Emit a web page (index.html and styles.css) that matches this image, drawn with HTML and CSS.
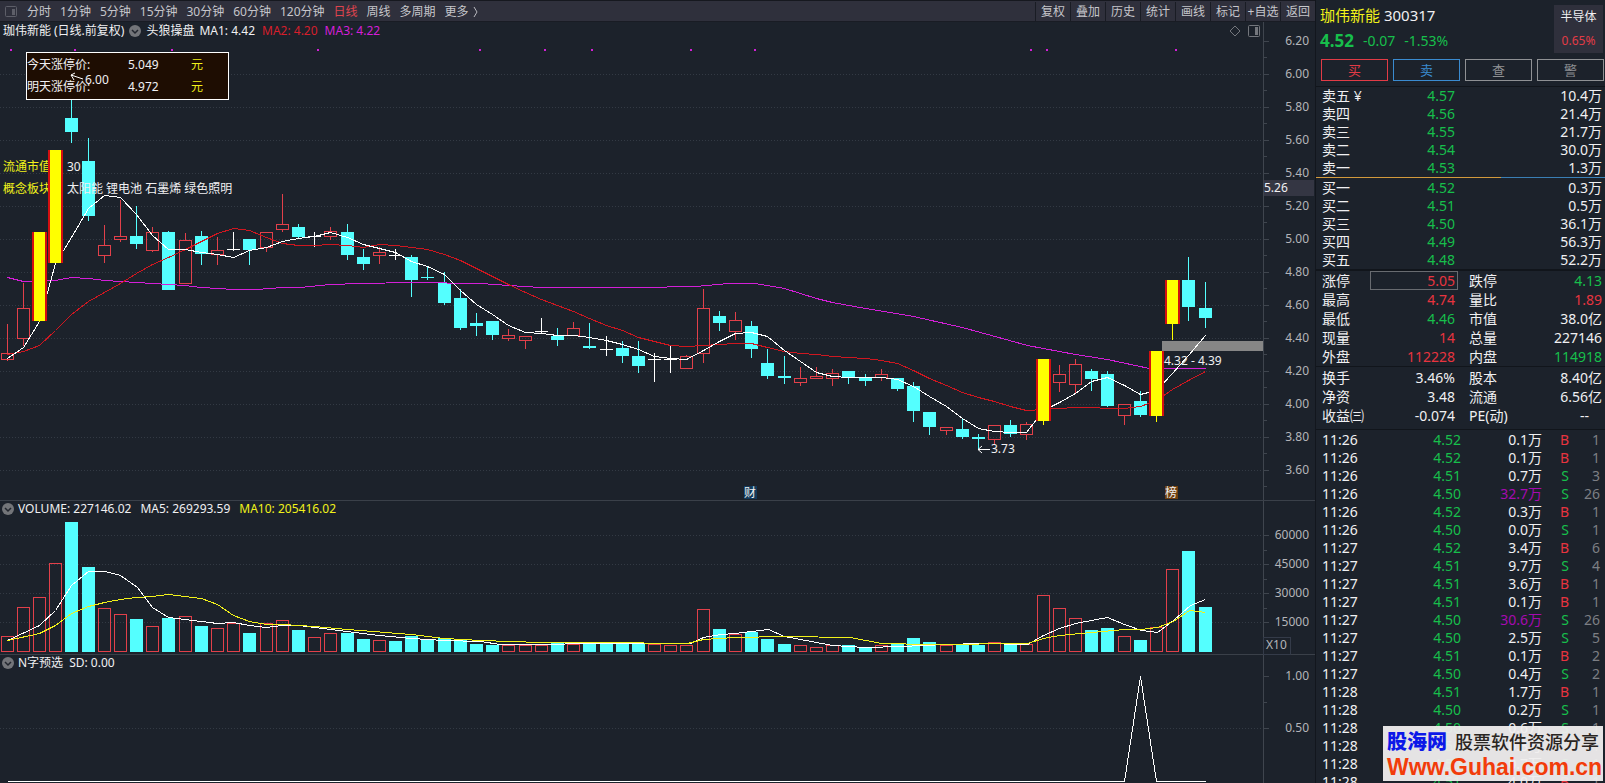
FILE: index.html
```html
<!DOCTYPE html>
<html lang="zh-CN">
<head>
<meta charset="utf-8">
<title>珈伟新能 300317</title>
<link rel="stylesheet" href="styles.css">
</head>
<body>
<div class="app">
  <main class="charts">
    <nav class="toolbar">
      <button class="tool-icon" aria-label="侧栏"><svg width="12" height="12" viewBox="0 0 12 12"><rect x="0.5" y="0.5" width="11" height="10" rx="1" fill="none" stroke="#5d5e68"/><rect x="7" y="3" width="3" height="6" fill="#5d5e68"/></svg></button>
      <div class="periods">
        <button>分时</button><button>1分钟</button><button>5分钟</button><button>15分钟</button><button>30分钟</button><button>60分钟</button><button>120分钟</button><button class="active">日线</button><button>周线</button><button>多周期</button><button class="more">更多<svg width="6" height="12" viewBox="0 0 6 12"><path d="M1 1L4 6L1 11" fill="none" stroke="#b8b8be"/></svg></button>
      </div>
      <div class="actions">
        <button>复权</button><button>叠加</button><button>历史</button><button>统计</button><button>画线</button><button>标记</button><button>+自选</button><button>返回</button>
      </div>
    </nav>

    <section class="panel">
      <header class="panel-head tall">
        <span class="legend"><span>珈伟新能<span class="paren">(日线.前复权)</span></span>
          <svg class="chev" width="12" height="12" viewBox="0 0 12 12"><circle cx="6" cy="6" r="6" fill="#737579"/><path d="M3 5L6 8L9 5" fill="none" stroke="#22262e" stroke-width="1.5"/></svg>
          <span>头狼操盘</span><span class="averages"><span>MA1: 4.42</span><span class="red">MA2: 4.20</span><span class="magenta">MA3: 4.22</span></span></span>
        <span class="head-icons">
          <svg width="12" height="12" viewBox="0 0 12 12"><path d="M6 1L11 6L6 11L1 6Z" fill="none" stroke="#74777d"/></svg>
          <svg width="12" height="12" viewBox="0 0 12 12"><rect x="0.5" y="0.5" width="11" height="11" rx="1" fill="none" stroke="#74777d"/><rect x="7" y="2" width="3" height="8" fill="#74777d"/></svg>
        </span>
        <span class="axis-pad"></span>
      </header>
      <svg class="plot" id="price" viewBox="0 40 1315 460"></svg>
    </section>

    <section class="panel">
      <header class="panel-head">
        <span class="legend">
          <svg class="chev" width="12" height="12" viewBox="0 0 12 12"><circle cx="6" cy="6" r="6" fill="#737579"/><path d="M3 5L6 8L9 5" fill="none" stroke="#22262e" stroke-width="1.5"/></svg>
          <span class="values"><span>VOLUME: 227146.02</span><span>MA5: 269293.59</span><span class="yellow">MA10: 205416.02</span></span></span>
        <span class="axis-pad"></span>
      </header>
      <svg class="plot" id="volume" viewBox="0 518 1315 136"></svg>
    </section>

    <section class="panel last">
      <header class="panel-head">
        <span class="legend">
          <svg class="chev" width="12" height="12" viewBox="0 0 12 12"><circle cx="6" cy="6" r="6" fill="#737579"/><path d="M3 5L6 8L9 5" fill="none" stroke="#22262e" stroke-width="1.5"/></svg>
          <span>N字预选</span><span>SD: 0.00</span></span>
        <span class="axis-pad"></span>
      </header>
      <svg class="plot" id="signal" viewBox="0 672 1315 111"></svg>
    </section>
  </main>

  <aside class="quote">
    <header class="quote-head">
      <div class="quote-title">
        <h1><span class="yellow">珈伟新能</span> 300317</h1>
        <p><strong>4.52</strong><span>-0.07</span><span>-1.53%</span></p>
      </div>
      <a class="sector" href="#">半导体<span>0.65%</span></a>
    </header>
    <div class="trade">
      <button class="buy">买</button><button class="sell">卖</button><button>查</button><button>警</button>
    </div>
    <table class="book asks"><tbody id="asks"></tbody></table>
    <div class="ratio"><span></span></div>
    <table class="book bids"><tbody id="bids"></tbody></table>
    <table class="stats"><tbody id="stats"></tbody></table>
    <table class="stats second"><tbody id="capital"></tbody></table>
    <table class="ticks"><tbody id="ticks"></tbody></table>
    <div class="brand">
      <div><b>股海网</b><span>股票软件资源分享</span></div>
      <a href="#">Www.Guhai.com.cn</a>
    </div>
  </aside>
</div>
<script src="app.js"></script>
</body>
</html>
```

FILE: styles.css
```css
* { box-sizing: border-box; }
body {
  margin: 0;
  background: #1c222b;
  color: #f0f0f2;
  font: 12px/18px "Noto Sans", "Noto Sans CJK SC", sans-serif;
}
button { font: inherit; color: inherit; background: none; border: 0; padding: 0; margin: 0; }
a { color: inherit; text-decoration: none; }
.app {
  display: grid;
  grid-template-columns: minmax(0, 1fr) 290px;
  height: 100vh;
  overflow: hidden;
}
.red { color: #d61f2c; }
.magenta { color: #d41fd8; }
.yellow { color: #f2f21a; }

.charts { min-width: 0; }
.toolbar {
  display: flex;
  align-items: center;
  height: 22px;
  padding-top: 1px;
  background: #2f303c;
  border-top: 1px solid #16181f;
  border-bottom: 1px solid #191c24;
  color: #c6c6cb;
  line-height: 20px;
}
.tool-icon { display: flex; width: 27px; padding-left: 5px; }
.periods { display: flex; gap: 9px; flex: 1; white-space: nowrap; }
.active { color: #e0444e; }
.more { display: flex; align-items: center; gap: 4px; }
.actions { display: flex; }
.actions button { width: 35px; border-left: 1px solid #191c24; white-space: nowrap; }

.panel { border-bottom: 1px solid #3a4049; }
.panel.last { border-bottom: 0; }
.panel-head { display: flex; height: 17px; line-height: 16px; white-space: nowrap; }
.panel-head.tall { height: 18px; line-height: 18px; }
.legend { display: flex; align-items: center; gap: 6px; flex: 1; padding: 0 0 1px 2px; }
.legend .chev { margin-right: -2px; }
.panel-head.tall .legend { padding: 0 0 0 3px; gap: 5px; }
.panel-head.tall .chev { margin-right: 0; }
.averages { display: flex; gap: 7px; }
.values { display: flex; gap: 9px; }
.paren { padding-left: 3px; }
.head-icons { display: flex; align-items: center; gap: 7px; padding: 0 3px; }
.axis-pad { width: 52px; border-left: 1px solid #3f454e; }
.plot { display: block; width: 100%; height: auto; overflow: visible; font-size: 12px; }
.plot text { fill: #f0f0f2; }
.plot .axis-text { fill: #b4b5b9; text-anchor: end; }
.plot .unit { fill: #b4b5b9; }
.plot .label-yellow { fill: #f2f21a; }

.quote { position: relative; border-left: 1px solid #12161d; font-size: 14px; overflow: hidden; }
.quote-head { display: flex; justify-content: space-between; height: 59px; padding: 5px 2px 0 4px; }
.quote-title h1 { margin: 0; font-size: 15px; line-height: 20px; font-weight: 400; }
.quote-title p { display: flex; align-items: center; gap: 9px; margin: 4px 0 0; line-height: 24px; color: #17bf4b; }
.quote-title strong { font-size: 17px; }
.sector {
  display: flex;
  flex-direction: column;
  width: 49px;
  height: 48px;
  background: #2f303c;
  font-size: 12px;
  line-height: 24px;
  text-align: center;
}
.sector span { color: #e23b46; }
.trade { display: grid; grid-template-columns: repeat(4, 1fr); gap: 5px; padding: 0 1px 5px 5px; border-bottom: 1px solid #11151b; }
.trade button { height: 22px; border: 1px solid #8f9194; color: #8f9194; font-size: 13px; line-height: 20px; }
.trade .buy { border-color: #e23b46; color: #e23b46; }
.trade .sell { border-color: #3a8bd0; color: #3a8bd0; }

table { width: 100%; border-collapse: separate; border-spacing: 0; table-layout: fixed; }
th, td { padding: 0; font-weight: 400; height: 18px; line-height: 18px; white-space: nowrap; }
th { text-align: left; }
td { text-align: right; }
.up { color: #e8343f; }
.down { color: #17bf4b; }
.big { color: #a50ab0; }
.book th { width: 60px; padding-left: 6px; }
.book td:nth-child(2) { width: 79px; }
.book td:last-child { padding-right: 3px; }
.ratio { height: 2px; background: #1c222b; }
.ratio span { display: block; height: 1px; background: linear-gradient(to right, #d29a3c 64%, #3a7fb5 64%); }
.bids { border-bottom: 2px solid #11151b; }
.stats { border-bottom: 1px solid #11151b; }
.stats th, .stats td { height: 19px; line-height: 19px; }
.stats th:first-child { width: 54px; padding-left: 6px; }
.stats td:nth-child(2) { width: 88px; padding-right: 3px; }
.stats th:nth-child(3) { padding-left: 11px; width: 66px; }
.stats td:last-child { padding-right: 3px; }
.stats.second { padding: 1px 0 4px; }
.stats .boxed { outline: 1px solid #686b70; outline-offset: -1px; }
.stats td.dash:last-child { padding-right: 16px; }
.ticks { padding-top: 1px; }
.ticks th { width: 59px; padding-left: 6px; }
.ticks td:nth-child(2) { width: 86px; }
.ticks td:nth-child(3) { width: 81px; }
.ticks td:nth-child(4) { width: 27px; }
.ticks td:last-child { padding-right: 5px; color: #7c7f84; }

.brand {
  position: absolute;
  right: 2px;
  bottom: 2px;
  width: 220px;
  height: 55px;
  padding: 2px 4px;
  background: rgba(240, 238, 238, 0.95);
  white-space: nowrap;
}
.brand div { display: flex; align-items: center; gap: 8px; line-height: 28px; }
.brand b { color: #0c18e8; font-size: 20px; font-weight: 900; }
.brand span { color: #2a2522; font-size: 18px; font-weight: 500; }
.brand a { display: block; color: #f23c0a; font: bold 23px/22px "Liberation Sans", Arial, sans-serif; }
```

FILE: app.js
```js
const PITCH = 16.189;
const cx = i => Math.floor(7.06 + i * PITCH);
const CYAN = '#54ffff';
const RED = '#e2404a';

// [kind, high, top, bottom, low, volumeTop, volumeKind]; c = falling, r = rising, w = unchanged, y = limit up
const candles = [
  ['r',324,353,359,361,636],['r',283,308,338,346,607],['y',232,232,321,322,597],['y',150,150,263,263,563],
  ['c',99,118,132,143,522],['c',138,161,216,221,567],['r',225,245,255,263,608],['r',200,236,239,242,614],
  ['c',206,236,244,249,619],['r',227,232,250,252,626],['c',231,232,290,290,618],['r',233,240,283,283,616],
  ['c',231,236,254,265,626],['r',237,250,254,265,628],['w',232,249,249,251,623,'r'],['c',239,239,250,265,633],
  ['r',232,232,247,252,623],['r',194,224,229,232,620],['c',224,227,237,239,630],['w',232,236,236,247,637,'r'],
  ['r',227,231,236,240,633],['c',224,232,255,260,633],['c',249,257,264,270,639],['r',247,252,255,264,640],
  ['w',249,255,255,260,641,'c'],['c',255,257,280,297,636],['c',267,277,278,280,639],['c',272,283,303,305,638],
  ['c',289,298,328,330,639],['c',313,323,326,336,644],['c',321,321,335,340,645],['r',329,335,338,341,645],
  ['r',336,336,340,349,645],['w',318,331,331,333,645,'r'],['c',328,336,340,346,643],['r',322,328,335,335,644],
  ['c',323,346,348,349,643],['w',336,349,349,356,644,'c'],['c',341,348,356,363,643],['c',341,356,366,373,643],
  ['w',353,359,359,382,644,'r'],['w',346,359,359,373,645,'r'],['r',355,356,368,369,645],['r',289,308,353,363,609],
  ['c',311,316,323,331,629],['r',312,320,331,340,634],['c',321,326,349,358,632],['c',349,363,376,379,639],
  ['c',356,376,378,384,644],['r',367,378,382,386,645],['r',367,376,378,379,647],['r',369,373,378,386,645],
  ['c',371,371,378,384,645],['c',374,377,381,386,647],['r',369,374,377,381,645],['c',378,378,389,391,644],
  ['c',382,386,411,422,638],['c',412,412,427,435,642],['r',427,427,430,435,645],['c',418,429,437,439,645],
  ['c',434,437,439,450,645],['r',425,425,439,444,642],['c',420,425,434,437,645],['r',422,424,434,440,644],
  ['y',359,359,421,425,595],['r',365,374,382,392,608],['r',359,364,384,393,618],['c',369,371,379,391,630],
  ['c',371,374,406,407,628],['r',404,404,415,425,636],['c',391,401,415,417,640],['y',351,351,416,422,627],
  ['y',280,280,324,340,569],['c',257,280,307,321,551],['c',282,308,318,328,607]
];

const ma1 = [358,347,321,263,237,208,195,197,214,235,249,249,252,254,257,250,247,241,238,236,232,237,244,248,252,261,266,274,290,304,314,325,332,333,335,335,337,340,344,349,356,358,359,350,341,333,332,336,350,361,372,376,377,377,377,379,386,396,406,418,428,431,432,432,410,402,393,381,377,385,394,390,373,355,335];
const ma2 = [354,351,345,330,314,301,292,283,273,264,257,249,241,233,228,230,237,243,245,245,244,245,247,244,245,247,249,254,260,268,276,284,292,299,305,311,318,325,330,337,341,345,346,345,344,343,343,347,351,353,354,356,357,358,360,363,370,378,385,392,397,401,406,410,409,408,407,407,408,408,406,400,389,380,371];
const ma3 = [[7,277],[23,281],[55,280],[71,277],[88,278],[104,280],[136,282],[184,285],[201,287],[233,289],[256,289],[282,287],[300,287],[330,284],[360,283],[411,282],[480,283],[508,285],[541,287],[638,287],[695,286],[728,283],[755,283],[784,288],[816,298],[832,302],[865,308],[913,316],[962,327],[1027,345],[1075,354],[1107,359],[1149,368],[1205,368]];
const vma5 = [[7,640],[39,625],[55,610],[71,585],[88,571],[105,571],[120,575],[137,587],[152,607],[168,617],[201,621],[217,623],[233,622],[249,625],[266,627],[282,625],[298,625],[330,629],[379,635],[411,638],[444,640],[480,641],[500,644],[530,644],[600,643],[690,643],[703,637],[720,634],[735,633],[751,631],[768,629],[784,636],[832,645],[865,647],[900,646],[946,644],[980,643],[1027,644],[1043,635],[1059,628],[1075,623],[1107,617],[1124,624],[1141,630],[1157,632],[1173,620],[1190,605],[1205,599]];
const vma10 = [[7,640],[39,633],[55,625],[71,613],[88,606],[104,602],[120,599],[136,597],[152,596],[168,594],[184,596],[201,598],[217,604],[233,615],[249,621],[266,624],[282,624],[314,626],[347,629],[411,634],[444,638],[480,640],[541,642],[600,642],[687,643],[703,639],[735,637],[784,636],[850,637],[881,643],[930,644],[1027,643],[1043,638],[1059,635],[1091,632],[1124,629],[1141,629],[1157,627],[1173,621],[1189,610],[1205,612]];

const rect = (x, y, w, h, fill) => `<rect x="${x}" y="${y}" width="${w}" height="${h}" fill="${fill}"/>`;
const frame = (x, y, w, h, stroke, fill = 'none') => `<rect x="${x + 0.5}" y="${y + 0.5}" width="${w - 1}" height="${h - 1}" fill="${fill}" stroke="${stroke}"/>`;
const text = (x, y, s, cls = '') => `<text x="${x}" y="${y}" class="${cls}">${s}</text>`;
const crisp = s => `<g shape-rendering="crispEdges">${s}</g>`;
const line = (pts, color) => `<polyline points="${pts.map(([x, y]) => `${x + 0.5},${y + 0.5}`).join(' ')}" fill="none" stroke="${color}" shape-rendering="crispEdges"/>`;
const grid = y => `<path d="M0 ${y + 0.5}H1263" stroke="#333a44" stroke-dasharray="1 2"/>`;
const axis = (top, height) => rect(1263, top, 1, height, '#3f454e');
const tick = (y, w) => rect(1264, y, w, 1, '#3f454e');

function candle([kind, high, top, bottom, low], i) {
  const x = cx(i);
  if (kind === 'w') return rect(x, high, 1, low - high, '#fff') + rect(x - 6, top, 13, 1, '#fff');
  if (kind === 'c') return rect(x, high, 1, low - high, CYAN) + rect(x - 6, top, 13, bottom - top, CYAN);
  if (kind === 'r') return rect(x, high, 1, top - high, RED) + rect(x, bottom, 1, low - bottom, RED) + frame(x - 6, top, 13, bottom - top + 1, RED);
  return rect(x - 7, top, 15, bottom - top, '#d40f10') + rect(x - 5, top, 11, bottom - top, '#ffff00') + rect(x, bottom, 1, low - bottom, '#ffff00');
}

function drawPrice() {
  let base = axis(40, 460);
  let labels = '';
  for (let k = 0; k < 14; k++) {
    const y = 41 + 33 * k;
    if (k) base += grid(y);
    base += tick(y, 5) + tick(y + 16, 3);
    labels += text(1309, y + 4, (6.2 - 0.2 * k).toFixed(2), 'axis-text');
  }
  const dots = [11,75,172,318,480,545,592,691,755,1031,1047,1176].map(x => rect(x - 1, 49, 2, 2, '#d41fd8')).join('');
  const regular = candles.map((c, i) => c[0] === 'y' ? '' : candle(c, i)).join('');
  const limit = candles.map((c, i) => c[0] === 'y' ? candle(c, i) : '').join('');
  document.getElementById('price').innerHTML =
    crisp(base + dots + regular) +
    text(3, 171, '流通市值', 'label-yellow') + text(67, 171, '30') +
    text(3, 193, '概念板块', 'label-yellow') + text(67, 193, '太阳能 锂电池 石墨烯 绿色照明') +
    line(ma3, '#d41fd8') +
    line(ma2.map((y, i) => [cx(i), y]), '#cf1720') +
    crisp(rect(1162, 341, 101, 10, '#868686')) +
    line(ma1.map((y, i) => [cx(i), y]), '#ffffff') +
    crisp(limit + frame(26, 52, 203, 48, '#ffffff', '#1e0d02')) +
    text(27, 69, '今天涨停价:') + text(128, 69, '5.049') + text(191, 69, '元', 'label-yellow') +
    text(27, 91, '明天涨停价:') + text(128, 91, '4.972') + text(191, 91, '元', 'label-yellow') +
    '<path d="M83 79L71 75M75 73L71 75L74 80" fill="none" stroke="#fff"/>' + text(85, 84, '6.00') +
    '<path d="M990 449.5H978M982 446L978 449.5L982 453" fill="none" stroke="#fff"/>' + text(991, 453, '3.73') +
    text(1164, 365, '4.32 - 4.39') +
    rect(744, 486, 13, 13, '#123a5c') + text(744, 497, '财') +
    rect(1165, 486, 13, 13, '#6e3f10') + text(1165, 497, '榜') +
    labels + rect(1264, 180, 50, 16, '#343643') + text(1264, 192, '5.26');
}

function drawVolume() {
  const bars = candles.map((c, i) => {
    const kind = c[6] || c[0];
    const x = cx(i) - 6;
    return kind === 'c' ? rect(x, c[5], 13, 652 - c[5], CYAN) : frame(x, c[5], 13, 652 - c[5], RED);
  }).join('');
  let base = axis(518, 136);
  let labels = '';
  [60000, 45000, 30000, 15000].forEach((v, k) => {
    const y = 535 + 29 * k;
    base += grid(y) + tick(y, 5) + (k < 3 ? tick(y + 15, 3) : '');
    labels += text(1309, y + 4, v, 'axis-text');
  });
  document.getElementById('volume').innerHTML = crisp(base + bars + frame(1263, 637, 28, 18, '#343b49')) +
    line(vma5, '#ffffff') + line(vma10, '#f2f21a') + labels + text(1266, 649, 'X10', 'unit');
}

function drawSignal() {
  document.getElementById('signal').innerHTML =
    crisp(axis(672, 111) + tick(676, 5) + tick(702, 3) + grid(728) + tick(728, 5)) +
    line([[7, 781], [1124, 781], [1140, 676], [1156, 781], [1205, 781]], '#ffffff') +
    text(1309, 680, '1.00', 'axis-text') + text(1309, 732, '0.50', 'axis-text');
}

function rows(id, list, render) {
  document.getElementById(id).innerHTML = list.map(r => `<tr>${render(r)}</tr>`).join('');
}
const book = ([n, p, v]) => `<th scope="row">${n}</th><td class="down">${p}</td><td>${v}</td>`;
const stat = ([a, av, ac, b, bv, bc]) => `<th scope="row">${a}</th><td class="${ac}">${av}</td><th scope="row">${b}</th><td class="${bc}">${bv}</td>`;

drawPrice();
drawVolume();
drawSignal();
rows('asks', [['卖五 ¥','4.57','10.4万'],['卖四','4.56','21.4万'],['卖三','4.55','21.7万'],['卖二','4.54','30.0万'],['卖一','4.53','1.3万']], book);
rows('bids', [['买一','4.52','0.3万'],['买二','4.51','0.5万'],['买三','4.50','36.1万'],['买四','4.49','56.3万'],['买五','4.48','52.2万']], book);
rows('stats', [
  ['涨停','5.05','up boxed','跌停','4.13','down'],['最高','4.74','up','量比','1.89','up'],['最低','4.46','down','市值','38.0亿',''],
  ['现量','14','up','总量','227146',''],['外盘','112228','up','内盘','114918','down']], stat);
rows('capital', [['换手','3.46%','','股本','8.40亿',''],['净资','3.48','','流通','6.56亿',''],['收益㈢','-0.074','','PE(动)','--','dash']], stat);
rows('ticks', [
  ['11:26','4.52','0.1','B',1],['11:26','4.52','0.1','B',1],['11:26','4.51','0.7','S',3],['11:26','4.50','32.7','S',26],
  ['11:26','4.52','0.3','B',1],['11:26','4.50','0.0','S',1],['11:27','4.52','3.4','B',6],['11:27','4.51','9.7','S',4],
  ['11:27','4.51','3.6','B',1],['11:27','4.51','0.1','B',1],['11:27','4.50','30.6','S',26],['11:27','4.50','2.5','S',5],
  ['11:27','4.51','0.1','B',2],['11:27','4.50','0.4','S',2],['11:28','4.51','1.7','B',1],['11:28','4.50','0.2','S',1],
  ['11:28','4.50','0.6','S',1],['11:28','4.50','0.3','S',1],['11:28','4.50','0.7','S',1],['11:28','4.51','4.0','B',1]
], ([t, p, v, side, n]) => `<th scope="row">${t}</th><td class="down">${p}</td><td class="${v > 30 ? 'big' : ''}">${v}万</td><td class="${side === 'B' ? 'up' : 'down'}">${side}</td><td>${n}</td>`);
```
